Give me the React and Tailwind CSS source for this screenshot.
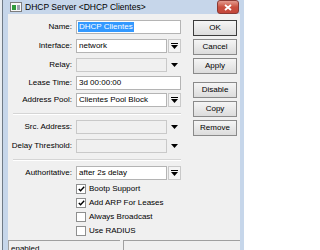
import React from 'react';

const font = "[font-family:'Liberation_Sans',Arial,sans-serif]";

function DropIcon({ bar }) {
  return (
    <svg width="7" height="6" viewBox="0 0 7 6" className="block">
      {bar && <rect x="0" y="0" width="7" height="1" fill="#000" />}
      <polygon points={bar ? '0,2 7,2 3.5,6' : '0,1 7,1 3.5,5'} fill="#000" />
    </svg>
  );
}

function Field({ value, disabled, selected, combo, optional }) {
  const base = disabled
    ? 'bg-[#f0f0f0] border-[#c9c9c9]'
    : 'bg-white border-[#b4b4b4]';
  const box = (
    <div className={`h-[14px] border ${base} flex items-center px-[1px] text-[8px] leading-none text-black overflow-hidden whitespace-nowrap ${combo || optional ? 'w-[91px]' : 'w-[105px]'}`}>
      {selected ? <span className="bg-[#3399ff] text-white px-[1px] py-[1px]">{value}</span> : <span className="pl-[1px]">{value}</span>}
    </div>
  );
  if (combo) {
    return (
      <div className="flex">
        {box}
        <div className="ml-[1px] w-[13px] h-[14px] border border-[#c9c9c9] bg-[#f4f4f4] flex items-center justify-center">
          <DropIcon bar />
        </div>
      </div>
    );
  }
  if (optional) {
    return (
      <div className="flex">
        {box}
        <div className="ml-[1px] w-[13px] h-[14px] flex items-center justify-center">
          <DropIcon />
        </div>
      </div>
    );
  }
  return box;
}

function Row({ label, mt, children }) {
  return (
    <div className={`flex items-center ${mt}`}>
      <div className="w-[64px] text-right text-[8px] leading-none text-black whitespace-nowrap">{label}</div>
      <div className="ml-[4px]">{children}</div>
    </div>
  );
}

function Check({ label, checked, mt }) {
  return (
    <div className={`flex items-center h-[10px] ${mt}`}>
      <div className="ml-[68px] w-[10px] h-[10px] border border-[#8e8f8f] bg-white flex items-center justify-center">
        {checked && (
          <svg width="7" height="6" viewBox="0 0 7 6" className="block">
            <path d="M0.8 3 L2.6 4.8 L6.2 0.8" stroke="#000" strokeWidth="1.4" fill="none" />
          </svg>
        )}
      </div>
      <span className="ml-[3px] text-[8px] leading-none text-black whitespace-nowrap">{label}</span>
    </div>
  );
}

function Btn({ children, mt, primary }) {
  return (
    <div className={`h-[16px] w-[44px] flex items-center justify-center text-[8px] leading-none text-black bg-linear-to-b from-[#f5f5f5] to-[#dcdcdc] border ${primary ? 'border-[#3c3c3c]' : 'border-[#8a8a8a]'} ${mt}`}>
      {children}
    </div>
  );
}

export default function App() {
  return (
    <div className={`w-[244px] h-[250px] overflow-hidden flex bg-[#eef1f4] ${font}`}>
      <div className="w-[2px] bg-[#e9edf1]" />
      <div className="flex-1 flex flex-col bg-[#c6d6ea] border-l border-[#6f7a86]">
        {/* title bar */}
        <div className="h-[19px] flex items-center">
          <div className="ml-[7px] w-[12px] h-[10px] bg-[#f7f7f7] border border-[#7d7d7d] flex items-center pl-[1px]">
            <div className="w-[4px] h-[5px] bg-[#2f9a3c]" />
            <div className="ml-[1px] w-[3px] h-[5px] bg-[#9aa3ad]" />
          </div>
          <span className="ml-[3px] text-[8.5px] leading-none text-black whitespace-nowrap">DHCP Server &lt;DHCP Clientes&gt;</span>
          <div className="ml-auto mr-[5px] w-[22px] h-[14px] rounded-[3px] border border-[#8a3a34] bg-linear-to-b from-[#e39a8e] via-[#c9503f] to-[#c4463a] flex items-center justify-center">
            <svg width="8" height="7" viewBox="0 0 8 7" className="block">
              <path d="M1 1 L7 6 M7 1 L1 6" stroke="#fff" strokeWidth="1.8" />
            </svg>
          </div>
        </div>
        {/* body */}
        <div className="flex-1 flex pl-[5px] pr-[4px]">
          <div className="flex-1 bg-[#f0f0f0] flex flex-col">
            <div className="flex">
              <div className="w-[173px] flex flex-col">
                <Row label="Name:" mt="mt-[6px]"><Field value="DHCP Clientes" selected /></Row>
                <Row label="Interface:" mt="mt-[5px]"><Field value="network" combo /></Row>
                <Row label="Relay:" mt="mt-[5px]"><Field value="" disabled optional /></Row>
                <Row label="Lease Time:" mt="mt-[4px]"><Field value="3d 00:00:00" /></Row>
                <Row label="Address Pool:" mt="mt-[3px]"><Field value="Clientes Pool Block" combo /></Row>
                <div className="mt-[6px] ml-[5px] w-[168px] border-t border-[#d5d5d5] border-b border-b-white" />
                <Row label="Src. Address:" mt="mt-[5px]"><Field value="" disabled optional /></Row>
                <Row label="Delay Threshold:" mt="mt-[5px]"><Field value="" disabled optional /></Row>
                <div className="mt-[6px] ml-[5px] w-[168px] border-t border-[#d5d5d5] border-b border-b-white" />
                <Row label="Authoritative:" mt="mt-[5px]"><Field value="after 2s delay" combo /></Row>
                <Check label="Bootp Support" checked mt="mt-[4px]" />
                <Check label="Add ARP For Leases" checked mt="mt-[4px]" />
                <Check label="Always Broadcast" mt="mt-[4px]" />
                <Check label="Use RADIUS" mt="mt-[4px]" />
              </div>
              <div className="ml-[12px] flex flex-col">
                <Btn primary mt="mt-[6px]">OK</Btn>
                <Btn mt="mt-[3px]">Cancel</Btn>
                <Btn mt="mt-[3px]">Apply</Btn>
                <Btn mt="mt-[8px]">Disable</Btn>
                <Btn mt="mt-[3px]">Copy</Btn>
                <Btn mt="mt-[3px]">Remove</Btn>
              </div>
            </div>
            {/* status bar */}
            <div className="mt-[4px] flex gap-[3px] flex-1">
              <div className="w-[112px] border-t border-l border-[#a0a0a0] text-[8px] leading-none pl-[2px] pt-[4px]">enabled</div>
              <div className="flex-1 border-t border-l border-[#a0a0a0]" />
            </div>
          </div>
        </div>
      </div>
    </div>
  );
}
